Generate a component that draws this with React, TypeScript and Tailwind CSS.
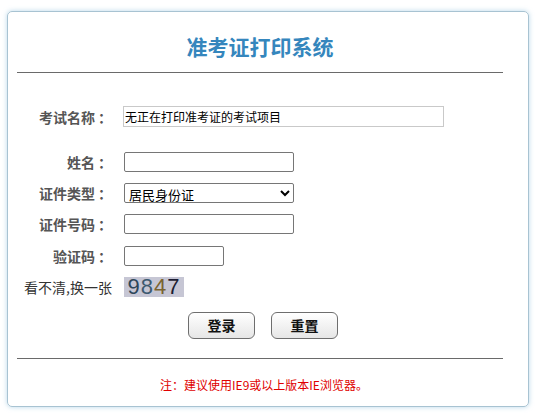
import React from 'react';

const font = { fontFamily: '"Noto Sans CJK SC", "Noto Sans", sans-serif' };

function Label({ children }: { children: React.ReactNode }) {
  return (
    <div className="w-[89px] shrink-0 text-right text-[14px] font-bold text-[#555] leading-none whitespace-nowrap">
      {children}
      <span className="pl-[3px]">：</span>
    </div>
  );
}

export default function App() {
  return (
    <div className="w-[540px] h-[413px] bg-white pt-[11px] pl-[7px]" style={font}>
      <div className="w-[522px] h-[396px] border border-[#a8c3d2] rounded-[5px] shadow-[0_0_5px_rgba(140,190,220,0.6)] pl-[9px] pr-[25px]">
        {/* 标题 */}
        <div className="h-[60px] flex items-center justify-center pt-[10px]">
          <h1 className="text-[21px] font-bold text-[#3586bd]">准考证打印系统</h1>
        </div>
        <div className="h-px bg-[#6a6a6a]" />

        <div className="pt-[28px] pl-[6px]">
          <div className="h-[31px] flex items-center">
            <Label>考试名称</Label>
            <input
              readOnly
              value="无正在打印准考证的考试项目"
              className="ml-[11px] w-[321px] h-[21px] border border-[#c9c9c9] px-[1px] text-[12px] text-black outline-none"
            />
          </div>

          <div className="h-[14px]" />

          <div className="h-[31px] flex items-center">
            <Label>姓名</Label>
            <input className="ml-[12px] w-[170px] h-[20px] border border-[#767676] rounded-[2px] outline-none" />
          </div>
          <div className="h-[31px] flex items-center">
            <Label>证件类型</Label>
            <select className="ml-[12px] w-[170px] h-[20px] border border-[#767676] rounded-[2px] text-[13px] text-black bg-white outline-none">
              <option>居民身份证</option>
            </select>
          </div>
          <div className="h-[32px] flex items-center">
            <Label>证件号码</Label>
            <input className="ml-[12px] w-[170px] h-[20px] border border-[#767676] rounded-[2px] outline-none" />
          </div>
          <div className="h-[31px] flex items-center">
            <Label>验证码</Label>
            <input className="ml-[12px] w-[100px] h-[20px] border border-[#767676] rounded-[2px] outline-none" />
          </div>
          <div className="h-[31px] flex items-center">
            <div className="w-[89px] shrink-0 text-right text-[14px] text-[#333] leading-none whitespace-nowrap">看不清,换一张</div>
            <div
              className="ml-[12px] w-[60px] h-[20px] bg-[#c6c6d4] flex items-center justify-center text-[22px] leading-none tracking-[1px]"
              style={{ fontFamily: '"Liberation Sans", sans-serif' }}
            >
              <span className="text-[#2e475a]">9</span>
              <span className="text-[#3d5a70]">8</span>
              <span className="text-[#7a6430]">4</span>
              <span className="text-[#1c1c32]">7</span>
            </div>
          </div>
        </div>

        <div className="flex justify-center gap-[16px] pt-[10px] pl-[6px]">
          <button className="w-[67px] h-[27px] border border-[#6e6e6e] rounded-[6px] bg-gradient-to-b from-white to-[#e6e6e6] text-[14px] font-bold text-[#111]">
            登录
          </button>
          <button className="w-[67px] h-[27px] border border-[#6e6e6e] rounded-[6px] bg-gradient-to-b from-white to-[#e6e6e6] text-[14px] font-bold text-[#111]">
            重置
          </button>
        </div>

        <div className="h-px bg-[#6a6a6a] mt-[19px]" />

        <div className="pt-[17px] text-center pl-[8px] text-[12px] text-[#e00000]">
          注：建议使用IE9或以上版本IE浏览器。
        </div>
      </div>
    </div>
  );
}
